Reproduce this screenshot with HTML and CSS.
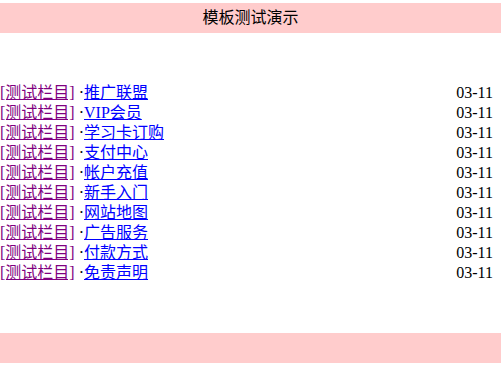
FILE: index.html
```html
<!DOCTYPE html>
<html lang="zh-CN">

<head>
  <meta charset="UTF-8" />
  <title>模板测试演示</title>
  <link rel="stylesheet" href="styles.css">
</head>

<body>

  <div class="top">模板测试演示</div>

  <table class="list">
    <tr><td><a href="#" class="cat">[测试栏目]</a> ·<a href="#">推广联盟</a></td><td class="date">03-11</td></tr>
    <tr><td><a href="#" class="cat">[测试栏目]</a> ·<a href="#">VIP会员</a></td><td class="date">03-11</td></tr>
    <tr><td><a href="#" class="cat">[测试栏目]</a> ·<a href="#">学习卡订购</a></td><td class="date">03-11</td></tr>
    <tr><td><a href="#" class="cat">[测试栏目]</a> ·<a href="#">支付中心</a></td><td class="date">03-11</td></tr>
    <tr><td><a href="#" class="cat">[测试栏目]</a> ·<a href="#">帐户充值</a></td><td class="date">03-11</td></tr>
    <tr><td><a href="#" class="cat">[测试栏目]</a> ·<a href="#">新手入门</a></td><td class="date">03-11</td></tr>
    <tr><td><a href="#" class="cat">[测试栏目]</a> ·<a href="#">网站地图</a></td><td class="date">03-11</td></tr>
    <tr><td><a href="#" class="cat">[测试栏目]</a> ·<a href="#">广告服务</a></td><td class="date">03-11</td></tr>
    <tr><td><a href="#" class="cat">[测试栏目]</a> ·<a href="#">付款方式</a></td><td class="date">03-11</td></tr>
    <tr><td><a href="#" class="cat">[测试栏目]</a> ·<a href="#">免责声明</a></td><td class="date">03-11</td></tr>
  </table>

  <div class="bottom"></div>

</body>

</html>
```

FILE: styles.css
```css
body {
  margin: 0;
  font-family: "Liberation Serif", "Noto Sans CJK SC", serif;
  font-size: 16px;
  color: #000;
}

.top {
  margin-top: 3px;
  height: 30px;
  line-height: 30px;
  background: #ffcccc;
  text-align: center;
}

.list {
  width: 100%;
  margin-top: 50px;
  border-collapse: collapse;
}

.list td {
  height: 20px;
  padding: 0;
  line-height: 20px;
  white-space: nowrap;
}

.list a {
  color: #0000ff;
}

.list a.cat {
  color: #800080;
}

.list .date {
  text-align: right;
  padding-right: 8px;
}

.bottom {
  margin-top: 50px;
  height: 30px;
  background: #ffcccc;
}
```
